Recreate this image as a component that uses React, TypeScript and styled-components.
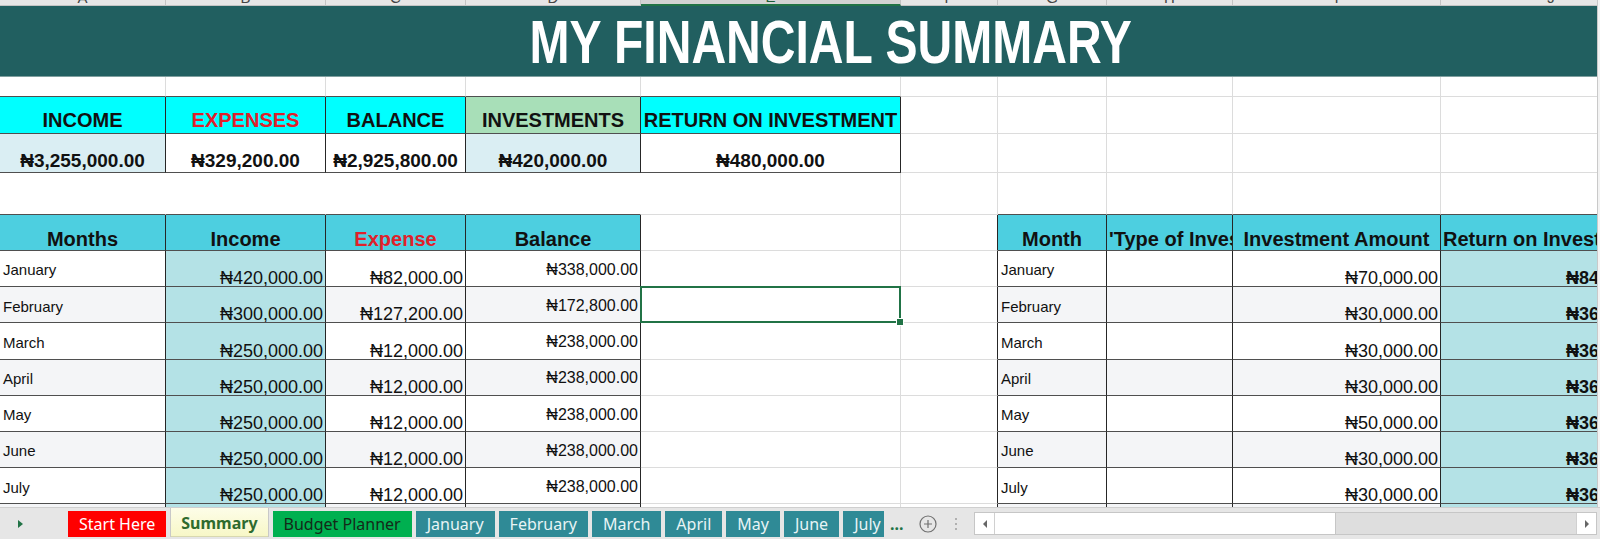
import React from "react";
import styled, { createGlobalStyle } from "styled-components";

const GRID = "#dcdcdc";
const DARK_V = "#262626";
const DARK_H = "#4f4f4f";
const SANS = `"Liberation Sans", Arial, "DejaVu Sans", sans-serif`;

const GlobalStyle = createGlobalStyle`
  html, body { margin: 0; padding: 0; }
  body { background: #fff; font-family: ${SANS}; overflow: hidden; }
  #root { width: 1600px; height: 539px; }
`;

const Workbook = styled.div`
  width: 1600px;
  height: 539px;
  display: flex;
  flex-direction: column;
  overflow: hidden;
  background: #fff;
`;

const SheetRegion = styled.div`
  height: 507px;
  display: flex;
`;

const SheetViewport = styled.div`
  width: 1597px;
  height: 100%;
  overflow: hidden;
`;

const WindowEdge = styled.div`
  flex: 1;
  background: #f3f3f3;
  border-left: 1px solid #c9c9c9;
`;

const SheetGrid = styled.div`
  display: grid;
  grid-template-columns: 166px 160px 140px 175px 260px 97px 109px 126px 208px 221px;
  grid-template-rows: 6px 71px 20px 37px 39px 42px 36px repeat(8, 36.2px);
  width: max-content;
`;

type EdgeProps = { $r?: string; $b?: string };

const CellBase = styled.div<EdgeProps>`
  box-sizing: border-box;
  min-width: 0;
  display: flex;
  overflow: hidden;
  white-space: nowrap;
  line-height: 1.15;
  border-right: 1px solid ${(p) => p.$r ?? "transparent"};
  border-bottom: 1px solid ${(p) => p.$b ?? "transparent"};
`;

const ColHeader = styled.div<{ $active?: boolean }>`
  box-sizing: border-box;
  display: flex;
  justify-content: center;
  align-items: flex-end;
  overflow: hidden;
  background: ${(p) => (p.$active ? "#d3d3d3" : "#e6e6e6")};
  border-right: 1px solid #c4c4c4;
  border-bottom: ${(p) => (p.$active ? "2px solid #217346" : "1px solid #c4c4c4")};
  color: ${(p) => (p.$active ? "#1d5e38" : "#444")};
  font-size: 15px;
  line-height: 15px;
`;

const TitleBand = styled.div`
  grid-column: 1 / -1;
  background: #215f60;
  display: flex;
  align-items: center;
  justify-content: center;
  color: #fff;
  font-family: ${SANS};
  font-weight: 700;
  font-size: 62px;
  border-bottom: 1px solid #7f9f9f;
  box-sizing: border-box;
`;

const TitleText = styled.span`
  display: inline-block;
  transform: scaleX(0.775);
  white-space: nowrap;
`;

const Blank = styled(CellBase)<{ $bg?: string }>`
  background: ${(p) => p.$bg ?? "#fff"};
`;

const SumHead = styled(CellBase)<{ $bg: string; $fg?: string }>`
  background: ${(p) => p.$bg};
  color: ${(p) => p.$fg ?? "#111"};
  font-weight: 700;
  font-size: 20px;
  justify-content: center;
  align-items: flex-end;
  padding-bottom: 1px;
`;

const SumValue = styled(CellBase)<{ $bg: string }>`
  background: ${(p) => p.$bg};
  color: #111;
  font-weight: 700;
  font-size: 19px;
  justify-content: center;
  align-items: flex-end;
`;

const TableHead = styled(CellBase)<{ $fg?: string; $align?: "left" | "center" }>`
  background: #4dcfe0;
  color: ${(p) => p.$fg ?? "#111"};
  font-weight: 700;
  font-size: 20px;
  justify-content: ${(p) => (p.$align === "left" ? "flex-start" : "center")};
  padding-left: ${(p) => (p.$align === "left" ? "2px" : "0")};
  align-items: flex-end;
  line-height: 1.05;
`;

const NameCell = styled(CellBase)<{ $alt?: boolean }>`
  background: ${(p) => (p.$alt ? "#f4f5f7" : "#fff")};
  color: #111;
  font-size: 15px;
  align-items: center;
  padding: 3px 0 0 3px;
`;

const AmountCell = styled(CellBase)<{ $alt?: boolean; $tint?: boolean; $bold?: boolean }>`
  background: ${(p) => (p.$tint ? "#b4e2e6" : p.$alt ? "#f4f5f7" : "#fff")};
  color: #111;
  font-size: 18px;
  line-height: 15px;
  font-weight: ${(p) => (p.$bold ? 700 : 400)};
  justify-content: flex-end;
  align-items: flex-end;
  padding-right: 2px;
`;

const BalanceCell = styled(CellBase)<{ $alt?: boolean }>`
  background: ${(p) => (p.$alt ? "#f4f5f7" : "#fff")};
  color: #111;
  font-size: 16px;
  justify-content: flex-end;
  align-items: center;
  padding: 3px 2px 0 0;
`;

const SelectedCell = styled(CellBase)`
  position: relative;
  overflow: visible;
  background: #fff;
  &::before {
    content: "";
    position: absolute;
    left: -1px;
    top: -1px;
    right: -1px;
    bottom: -1px;
    border: 2px solid #217346;
    pointer-events: none;
  }
  &::after {
    content: "";
    position: absolute;
    right: -4px;
    bottom: -4px;
    width: 6px;
    height: 6px;
    background: #217346;
    border: 1px solid #fff;
  }
`;

/* ---------- Tab strip ---------- */

const TabStrip = styled.div`
  height: 32px;
  box-sizing: border-box;
  display: flex;
  align-items: stretch;
  background: #e6e6e6;
  border-top: 1px solid #cfcfcf;
  font-family: "Noto Sans", "Open Sans", sans-serif;
`;

const SheetNav = styled.div`
  width: 68px;
  flex: none;
  display: flex;
  align-items: center;
  padding-left: 18px;
  box-sizing: border-box;
`;

const NavTriangle = styled.span`
  width: 0;
  height: 0;
  border-top: 4px solid transparent;
  border-bottom: 4px solid transparent;
  border-left: 5px solid #217346;
`;

const Tabs = styled.div`
  width: 816px;
  flex: none;
  display: flex;
  gap: 4px;
  padding: 3px 0 2px;
  box-sizing: border-box;
  overflow: hidden;
`;

const SheetTab = styled.div<{ $bg: string; $fg: string; $active?: boolean }>`
  flex: none;
  display: flex;
  align-items: center;
  padding: 0 11px;
  font-size: 16px;
  white-space: nowrap;
  background: ${(p) => p.$bg};
  color: ${(p) => p.$fg};
  font-weight: ${(p) => (p.$active ? 700 : 400)};
  ${(p) =>
    p.$active
      ? "margin-top: -3px; padding: 0 10px; border-left: 1px solid #c8c8c8; border-right: 1px solid #c8c8c8; box-shadow: inset 0 -1px 0 #d8d8b0;"
      : ""}
`;

const MoreTabs = styled.div`
  margin-left: 6px;
  width: 18px;
  display: flex;
  align-items: center;
  color: #217346;
  font-weight: 700;
  font-size: 16px;
`;

const AddSheet = styled.div`
  margin-left: 11px;
  display: flex;
  align-items: center;
`;

const Splitter = styled.div`
  margin-left: 18px;
  display: flex;
  flex-direction: column;
  justify-content: center;
  gap: 3px;
  & > span {
    width: 2px;
    height: 2px;
    background: #b0b0b0;
  }
`;

const HScroll = styled.div`
  margin-left: 17px;
  flex: 1;
  align-self: center;
  height: 23px;
  display: flex;
  box-sizing: border-box;
  border: 1px solid #c6c6c6;
  background: #dedede;
`;

const ScrollButton = styled.div<{ $dir: "left" | "right" }>`
  width: 20px;
  flex: none;
  background: #fff;
  display: flex;
  align-items: center;
  justify-content: center;
  box-sizing: border-box;
  ${(p) => (p.$dir === "left" ? "border-right: 1px solid #d0d0d0;" : "border-left: 1px solid #d0d0d0;")}
  &::before {
    content: "";
    width: 0;
    height: 0;
    border-top: 4px solid transparent;
    border-bottom: 4px solid transparent;
    ${(p) => (p.$dir === "left" ? "border-right: 4px solid #666;" : "border-left: 4px solid #666;")}
  }
`;

const Thumb = styled.div`
  width: 340px;
  flex: none;
  background: #fff;
  border-right: 1px solid #c6c6c6;
`;

const Track = styled.div`
  flex: 1;
`;

const StripEdge = styled.div`
  width: 3px;
  flex: none;
`;

/* ---------- Data ---------- */

const LETTERS = ["A", "B", "C", "D", "E", "F", "G", "H", "I", "J"];

const rows = [
  { m: "January", inc: "₦420,000.00", exp: "₦82,000.00", bal: "₦338,000.00", inv: "₦70,000.00", ret: "₦84,000.00" },
  { m: "February", inc: "₦300,000.00", exp: "₦127,200.00", bal: "₦172,800.00", inv: "₦30,000.00", ret: "₦36,000.00" },
  { m: "March", inc: "₦250,000.00", exp: "₦12,000.00", bal: "₦238,000.00", inv: "₦30,000.00", ret: "₦36,000.00" },
  { m: "April", inc: "₦250,000.00", exp: "₦12,000.00", bal: "₦238,000.00", inv: "₦30,000.00", ret: "₦36,000.00" },
  { m: "May", inc: "₦250,000.00", exp: "₦12,000.00", bal: "₦238,000.00", inv: "₦50,000.00", ret: "₦36,000.00" },
  { m: "June", inc: "₦250,000.00", exp: "₦12,000.00", bal: "₦238,000.00", inv: "₦30,000.00", ret: "₦36,000.00" },
  { m: "July", inc: "₦250,000.00", exp: "₦12,000.00", bal: "₦238,000.00", inv: "₦30,000.00", ret: "₦36,000.00" },
];

const summary = [
  { label: "INCOME", value: "₦3,255,000.00", head: "#00ffff", fg: "#111", cell: "#daeef3" },
  { label: "EXPENSES", value: "₦329,200.00", head: "#00ffff", fg: "#e0202a", cell: "#fff" },
  { label: "BALANCE", value: "₦2,925,800.00", head: "#00ffff", fg: "#111", cell: "#fff" },
  { label: "INVESTMENTS", value: "₦420,000.00", head: "#a8dfb8", fg: "#111", cell: "#daeef3" },
  { label: "RETURN ON INVESTMENT", value: "₦480,000.00", head: "#00ffff", fg: "#111", cell: "#fff" },
];

const tabs = [
  { name: "Start Here", bg: "#ff0000", fg: "#ffffff" },
  { name: "Summary", bg: "linear-gradient(180deg, #fdfde8 0%, #f7f7c6 100%)", fg: "#2e6b2e", active: true },
  { name: "Budget Planner", bg: "#00b050", fg: "#142a18" },
  { name: "January", bg: "#2f8a96", fg: "#e8f4f5" },
  { name: "February", bg: "#2f8a96", fg: "#e8f4f5" },
  { name: "March", bg: "#2f8a96", fg: "#e8f4f5" },
  { name: "April", bg: "#2f8a96", fg: "#e8f4f5" },
  { name: "May", bg: "#2f8a96", fg: "#e8f4f5" },
  { name: "June", bg: "#2f8a96", fg: "#e8f4f5" },
  { name: "July", bg: "#2f8a96", fg: "#e8f4f5" },
];

const GridTail = ({ count, b = GRID }: { count: number; b?: string }) => (
  <>
    {Array.from({ length: count }).map((_, i) => (
      <Blank key={i} $r={GRID} $b={b} />
    ))}
  </>
);

type Row = (typeof rows)[number];

const DataRow = ({ row, index, empty }: { row?: Row; index: number; empty?: boolean }) => {
  const alt = index % 2 === 1;
  const selected = row?.m === "February";
  return (
    <>
      <NameCell $alt={alt} $r={DARK_V} $b={DARK_H}>{empty ? null : row?.m}</NameCell>
      <AmountCell $tint $r={DARK_V} $b={DARK_H}>{empty ? null : row?.inc}</AmountCell>
      <AmountCell $alt={alt} $r={DARK_V} $b={DARK_H}>{empty ? null : row?.exp}</AmountCell>
      <BalanceCell $alt={alt} $r={DARK_V} $b={DARK_H}>{empty ? null : row?.bal}</BalanceCell>
      {selected ? <SelectedCell $r={GRID} $b={GRID} /> : <Blank $r={GRID} $b={GRID} />}
      <Blank $r={DARK_V} $b={GRID} />
      <NameCell $alt={alt} $r={DARK_V} $b={DARK_H}>{empty ? null : row?.m}</NameCell>
      <Blank $bg={alt ? "#f4f5f7" : "#fff"} $r={DARK_V} $b={DARK_H} />
      <AmountCell $alt={alt} $r={DARK_V} $b={DARK_H}>{empty ? null : row?.inv}</AmountCell>
      <AmountCell $tint $bold $r={DARK_V} $b={DARK_H}>{empty ? null : row?.ret}</AmountCell>
    </>
  );
};

const AddIcon = () => (
  <svg width="18" height="18" viewBox="0 0 18 18">
    <circle cx="9" cy="9" r="8" fill="none" stroke="#707070" strokeWidth="1.2" />
    <path d="M9 5v8M5 9h8" stroke="#707070" strokeWidth="1.2" />
  </svg>
);

export default function App() {
  return (
    <>
      <GlobalStyle />
      <Workbook>
        <SheetRegion>
          <SheetViewport>
            <SheetGrid>
              {LETTERS.map((l) => (
                <ColHeader key={l} $active={l === "E"}>
                  <span>{l}</span>
                </ColHeader>
              ))}

              <TitleBand>
                <TitleText>MY FINANCIAL SUMMARY</TitleText>
              </TitleBand>

              {summary.map((s) => (
                <Blank key={s.label} $r={GRID} $b={DARK_H} />
              ))}
              <GridTail count={5} />

              {summary.map((s) => (
                <SumHead key={s.label} $bg={s.head} $fg={s.fg} $r={DARK_V} $b={DARK_H}>
                  {s.label}
                </SumHead>
              ))}
              <GridTail count={5} />

              {summary.map((s) => (
                <SumValue key={s.label} $bg={s.cell} $r={DARK_V} $b={DARK_H}>
                  {s.value}
                </SumValue>
              ))}
              <GridTail count={5} />

              <Blank $b={DARK_H} />
              <Blank $b={DARK_H} />
              <Blank $b={DARK_H} />
              <Blank $b={DARK_H} />
              <Blank $r={GRID} $b={GRID} />
              <Blank $r={GRID} $b={GRID} />
              <GridTail count={4} b={DARK_H} />

              <TableHead $r={DARK_V} $b={DARK_H}>Months</TableHead>
              <TableHead $r={DARK_V} $b={DARK_H}>Income</TableHead>
              <TableHead $fg="#e0202a" $r={DARK_V} $b={DARK_H}>Expense</TableHead>
              <TableHead $r={DARK_V} $b={DARK_H}>Balance</TableHead>
              <Blank $r={GRID} $b={GRID} />
              <Blank $r={DARK_V} $b={GRID} />
              <TableHead $r={DARK_V} $b={DARK_H}>Month</TableHead>
              <TableHead $align="left" $r={DARK_V} $b={DARK_H}>'Type of Investment</TableHead>
              <TableHead $r={DARK_V} $b={DARK_H}>Investment Amount</TableHead>
              <TableHead $align="left" $r={DARK_V} $b={DARK_H}>Return on Investment</TableHead>

              {rows.map((r, i) => (
                <DataRow key={r.m} row={r} index={i} />
              ))}
              <DataRow index={7} empty />
            </SheetGrid>
          </SheetViewport>
          <WindowEdge />
        </SheetRegion>

        <TabStrip>
          <SheetNav>
            <NavTriangle />
          </SheetNav>
          <Tabs>
            {tabs.map((t) => (
              <SheetTab key={t.name} $bg={t.bg} $fg={t.fg} $active={t.active}>
                {t.name}
              </SheetTab>
            ))}
          </Tabs>
          <MoreTabs>...</MoreTabs>
          <AddSheet>
            <AddIcon />
          </AddSheet>
          <Splitter>
            <span />
            <span />
            <span />
          </Splitter>
          <HScroll>
            <ScrollButton $dir="left" />
            <Thumb />
            <Track />
            <ScrollButton $dir="right" />
          </HScroll>
          <StripEdge />
        </TabStrip>
      </Workbook>
    </>
  );
}
